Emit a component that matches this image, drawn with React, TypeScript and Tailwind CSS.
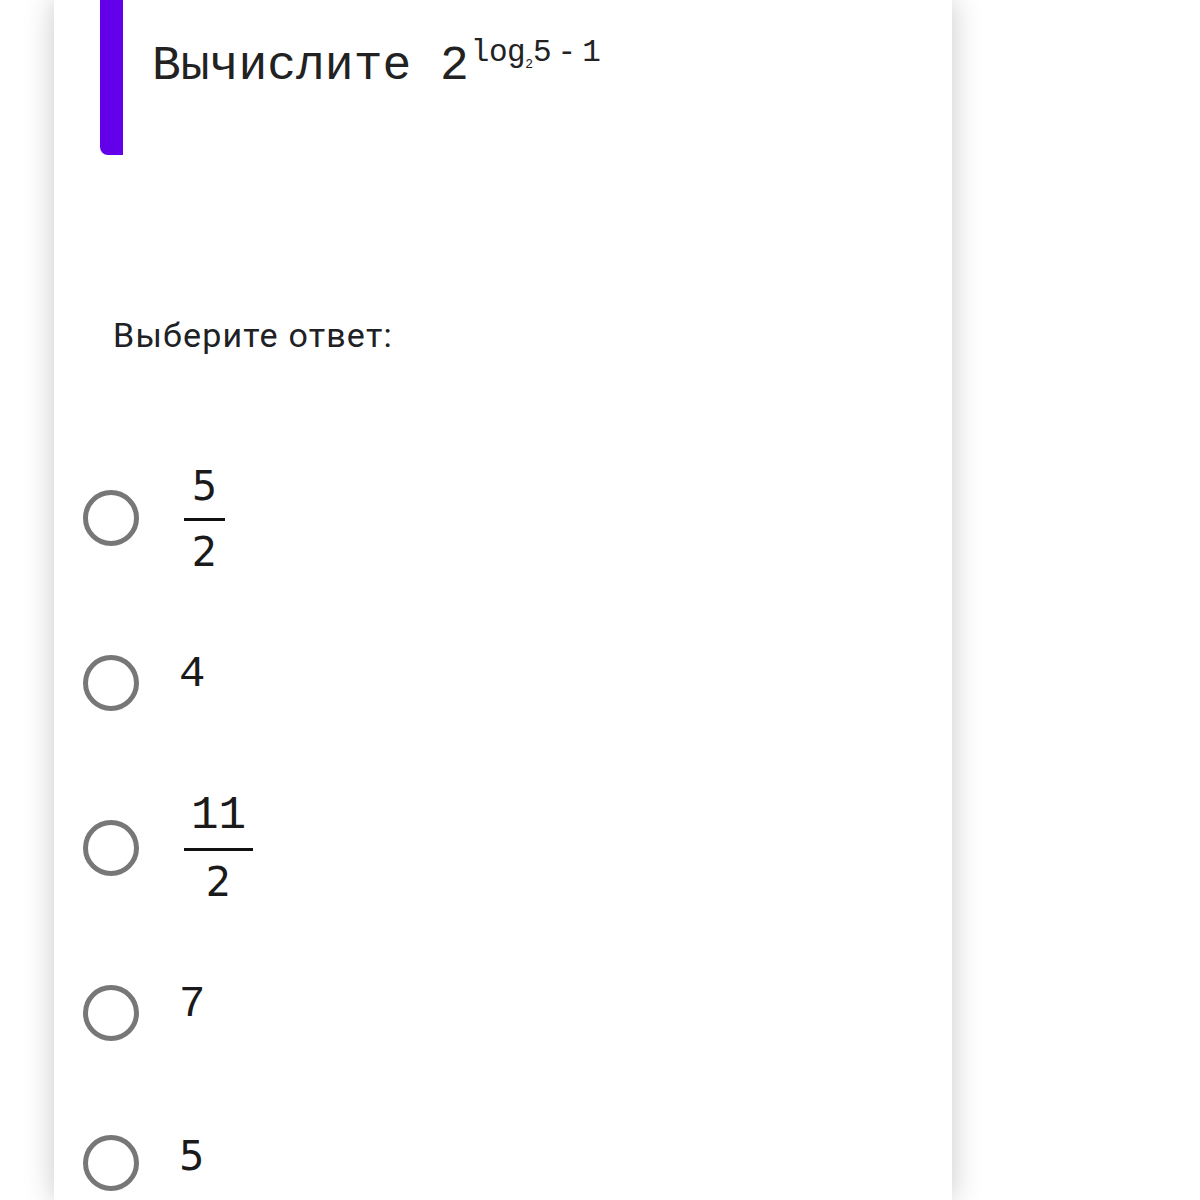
import React from "react";

const mono = { fontFamily: '"Liberation Mono", "Courier New", monospace' };
const sans = { fontFamily: '"DejaVu Sans", Verdana, sans-serif' };

function Radio() {
  return <div className="w-[56px] h-[56px] shrink-0 rounded-full border-[5px] border-[#777777] bg-white" />;
}

function Frac({ num, den, numMono, width }: { num: string; den: string; numMono?: boolean; width: number }) {
  return (
    <div className="flex flex-col items-center" style={{ width }}>
      <div
        className={numMono ? "text-[46px] leading-[34px] text-[#1a1a1a]" : "text-[40px] leading-[34px] text-[#1a1a1a]"}
        style={numMono ? mono : sans}
      >
        {num}
      </div>
      <div className="w-full h-[3px] bg-[#111111] my-[15px]" />
      <div className="text-[40px] leading-[32px] text-[#1a1a1a]" style={sans}>
        {den}
      </div>
    </div>
  );
}

export default function App() {
  return (
    <div className="w-[1200px] h-[1200px] bg-white overflow-hidden flex">
      <div className="ml-[54px] w-[898px] h-full bg-white shadow-[0_0_28px_rgba(0,0,0,0.22)] flex flex-col">
        <div className="flex pl-[46px]">
          <div className="w-[23px] h-[155px] bg-[#6200ea] rounded-bl-[8px] shrink-0" />
          <div className="pl-[29px] pt-[36px] flex items-start text-[#222222]" style={mono}>
            <span className="text-[48px] leading-[60px]">Вычислите 2</span>
            <span className="text-[31px] leading-[30px] mt-[2px] ml-[2px] flex items-start">
              <span className="tracking-[-0.5px]">log</span>
              <span className="text-[13px] leading-[13px] mt-[20px]">2</span>
              <span className="tracking-[6px]">5-1</span>
            </span>
          </div>
        </div>
        <div className="pl-[59px] mt-[160px] text-[34px] leading-[40px] tracking-[1.2px] text-[#202124]" style={{ fontFamily: "Roboto, sans-serif" }}>
          Выберите ответ:
        </div>
        <div className="flex flex-col pl-[29px] mt-[120px] gap-[94px]">
          <div className="h-[86px] flex items-center">
            <Radio />
            <div className="ml-[45px] mt-0">
              <Frac num="5" den="2" width={41} />
            </div>
          </div>
          <div className="h-[56px] flex items-center">
            <Radio />
            <div className="ml-[40px] -mt-[18px] text-[44px] leading-[48px] text-[#1a1a1a]" style={mono}>4</div>
          </div>
          <div className="h-[86px] flex items-center">
            <Radio />
            <div className="ml-[45px] mt-0">
              <Frac num="11" den="2" numMono width={69} />
            </div>
          </div>
          <div className="h-[56px] flex items-center">
            <Radio />
            <div className="ml-[40px] -mt-[18px] text-[44px] leading-[48px] text-[#1a1a1a]" style={mono}>7</div>
          </div>
          <div className="h-[56px] flex items-center">
            <Radio />
            <div className="ml-[40px] -mt-[14px] text-[40px] leading-[48px] text-[#1a1a1a]" style={sans}>5</div>
          </div>
        </div>
      </div>
    </div>
  );
}
